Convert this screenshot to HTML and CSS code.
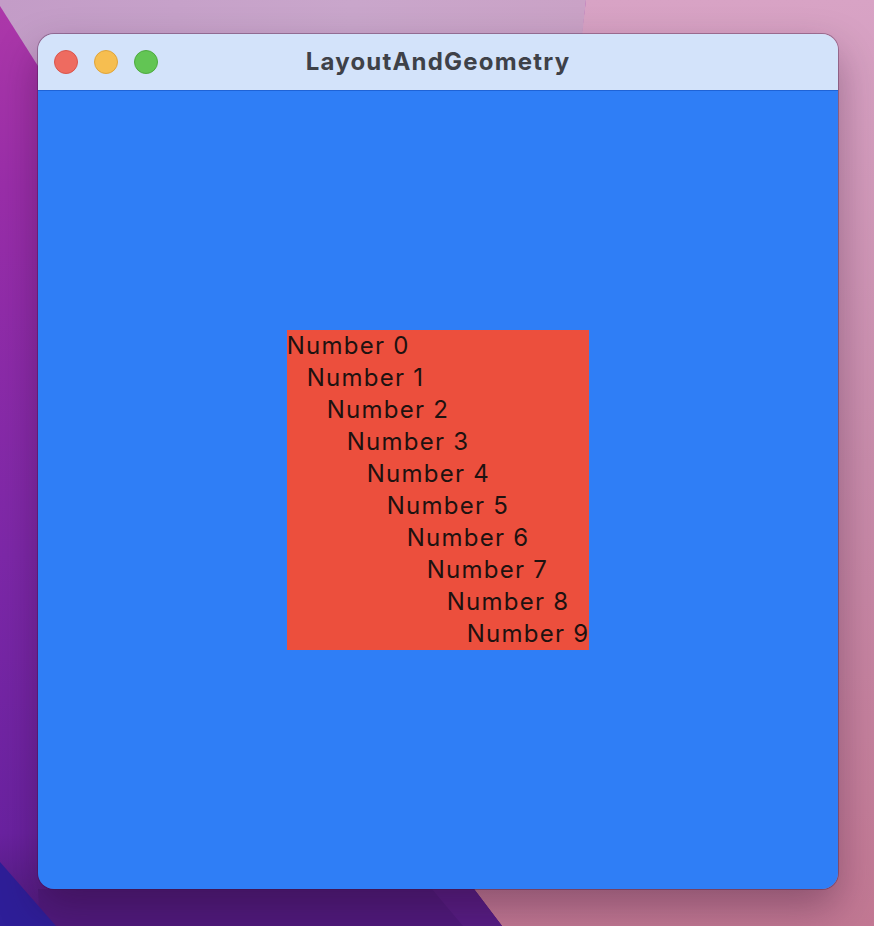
FILE: index.html
```html
<!DOCTYPE html>
<html lang="en">
<head>
<meta charset="UTF-8">
<meta name="viewport" content="width=device-width, initial-scale=1.0">
<title>LayoutAndGeometry</title>
<link rel="stylesheet" href="styles.css">
</head>
<body>
  <svg class="wallpaper" width="874" height="926" viewBox="0 0 874 926">
    <defs>
      <linearGradient id="pink" x1="0" y1="0" x2="0" y2="1">
        <stop offset="0" stop-color="#d8a3c5"/>
        <stop offset="0.5" stop-color="#c98cab"/>
        <stop offset="1" stop-color="#c27893"/>
      </linearGradient>
      <linearGradient id="violet" x1="0" y1="0" x2="0" y2="1">
        <stop offset="0" stop-color="#ad38a9"/>
        <stop offset="0.2" stop-color="#9a2ea9"/>
        <stop offset="0.6" stop-color="#7d28a8"/>
        <stop offset="0.9" stop-color="#6a22a0"/>
        <stop offset="1" stop-color="#4c1a78"/>
      </linearGradient>
      <linearGradient id="lilac" x1="0" y1="0" x2="1" y2="0">
        <stop offset="0" stop-color="#c39cc7"/>
        <stop offset="0.6" stop-color="#c9a6cb"/>
        <stop offset="1" stop-color="#caa2c6"/>
      </linearGradient>
    </defs>
    <rect width="874" height="926" fill="url(#pink)"/>
    <polygon points="0,0 586,0 474,889 502,926 0,926" fill="url(#violet)"/>
    <polygon points="0,0 586,0 560,240 38,66 0,6" fill="url(#lilac)"/>
    <polygon points="38,889 474,889 502,926 40,926" fill="#4f1a7c"/>
    <polygon points="0,862 56,926 0,926" fill="#2e1e98"/>
    <polygon points="432,889 474,889 502,926 463,926" fill="#5e1f8a" opacity="0.6"/>
  </svg>

  <div class="window">
    <div class="titlebar">
      <div class="lights">
        <span class="light close"></span>
        <span class="light minimize"></span>
        <span class="light zoom"></span>
      </div>
      <h1 class="title">LayoutAndGeometry</h1>
    </div>
    <main class="content">
      <div class="stack">
        <div class="row" style="padding-left: 0px">Number 0</div>
        <div class="row" style="padding-left: 20px">Number 1</div>
        <div class="row" style="padding-left: 40px">Number 2</div>
        <div class="row" style="padding-left: 60px">Number 3</div>
        <div class="row" style="padding-left: 80px">Number 4</div>
        <div class="row" style="padding-left: 100px">Number 5</div>
        <div class="row" style="padding-left: 120px">Number 6</div>
        <div class="row" style="padding-left: 140px">Number 7</div>
        <div class="row" style="padding-left: 160px">Number 8</div>
        <div class="row" style="padding-left: 180px">Number 9</div>
      </div>
    </main>
  </div>
</body>
</html>
```

FILE: styles.css
```css
body {
  margin: 0;
  padding: 34px 0 0 38px;
  width: 874px;
  height: 926px;
  box-sizing: border-box;
  overflow: hidden;
  font-family: Inter, "Noto Sans", sans-serif;
}

/* desktop picture behind the window */
.wallpaper {
  position: fixed;
  top: 0;
  left: 0;
  z-index: -1;
}

.window {
  width: 800px;
  height: 855px;
  border-radius: 16px;
  overflow: hidden;
  display: flex;
  flex-direction: column;
  box-shadow: 0 0 0 1px rgba(60, 20, 60, 0.35), 0 18px 40px rgba(40, 10, 40, 0.35);
}

.titlebar {
  height: 56px;
  flex-shrink: 0;
  background-color: #d3e3fa;
  border-bottom: 1px solid #1f63d6;
  display: grid;
  grid-template-columns: 1fr auto 1fr;
  align-items: center;
}

.lights {
  display: flex;
  gap: 16px;
  padding-left: 16px;
}

.light {
  width: 24px;
  height: 24px;
  border-radius: 50%;
  box-sizing: border-box;
}
.close { background-color: #ee6b60; border: 1px solid #d9554b; }
.minimize { background-color: #f6be50; border: 1px solid #dfa43a; }
.zoom { background-color: #62c554; border: 1px solid #4eaa3f; }

.title {
  margin: 0 0 1px;
  font-size: 24px;
  font-weight: 700;
  color: #3e4148;
  letter-spacing: 1.2px;
}

.content {
  flex: 1;
  background-color: #2f7ef6;
  display: flex;
  align-items: center;
  justify-content: center;
}

.stack {
  background-color: #ec4f3d;
  color: #1e1210;
  font-size: 24px;
  letter-spacing: 1.25px;
  line-height: 32px;
}

.row {
  white-space: nowrap;
}
```
